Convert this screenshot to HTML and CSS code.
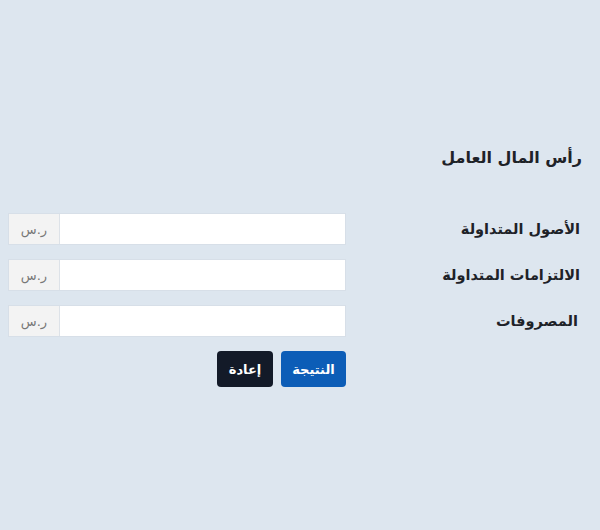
FILE: index.html
```html
<!DOCTYPE html>
<html lang="ar" dir="rtl">
<head>
<meta charset="utf-8">
<link rel="stylesheet" href="styles.css">
</head>
<body>
<main class="page">
  <h2 class="title">رأس المال العامل</h2>
  <form class="form">
    <label class="label" for="a1">الأصول المتداولة</label>
    <div class="group"><input id="a1" class="input" type="text"><span class="addon">ر.س</span></div>

    <label class="label" for="a2">الالتزامات المتداولة</label>
    <div class="group"><input id="a2" class="input" type="text"><span class="addon">ر.س</span></div>

    <label class="label label-alt" for="a3">المصروفات</label>
    <div class="group"><input id="a3" class="input" type="text"><span class="addon">ر.س</span></div>

    <div class="spacer"></div>
    <div class="actions">
      <button type="button" class="btn btn-primary">النتيجة</button>
      <button type="button" class="btn btn-dark">إعادة</button>
    </div>
  </form>
</main>
</body>
</html>
```

FILE: styles.css
```css
html, body {
  margin: 0;
  padding: 0;
  background: #dde6ef;
}
body {
  font-family: "DejaVu Sans", "Noto Sans", sans-serif;
  color: #1e2228;
  width: 600px;
  height: 530px;
  overflow: hidden;
}
.page {
  padding: 146px 18px 0 8px;
}
.title {
  margin: 0 0 43px 0;
  font-size: 16px;
  font-weight: bold;
  line-height: 24px;
  text-align: right;
}
.form {
  display: grid;
  grid-template-columns: 1fr 338px;
  row-gap: 14px;
  align-items: center;
}
.label {
  font-size: 14.5px;
  font-weight: bold;
  padding-right: 2px;
}
.label-alt {
  padding-right: 4px;
}
.group {
  display: flex;
  height: 32px;
  background: #fff;
  border: 1px solid #d7dfe8;
  box-sizing: border-box;
}
.input {
  flex: 1;
  border: none;
  outline: none;
  background: #fff;
  min-width: 0;
  padding: 0 8px;
  font-family: inherit;
}
.addon {
  width: 50px;
  background: #f3f3f3;
  border-right: 1px solid #dde2e8;
  color: #777;
  font-size: 13px;
  display: flex;
  align-items: center;
  justify-content: center;
}
.actions {
  display: flex;
  gap: 8px;
}
.btn {
  height: 36px;
  border: none;
  border-radius: 4px;
  color: #fff;
  font-family: inherit;
  font-size: 13px;
  font-weight: bold;
  padding: 0;
  cursor: pointer;
}
.btn-primary {
  width: 65px;
  background: #0c5db7;
}
.btn-dark {
  width: 56px;
  background: #131a28;
}
```
